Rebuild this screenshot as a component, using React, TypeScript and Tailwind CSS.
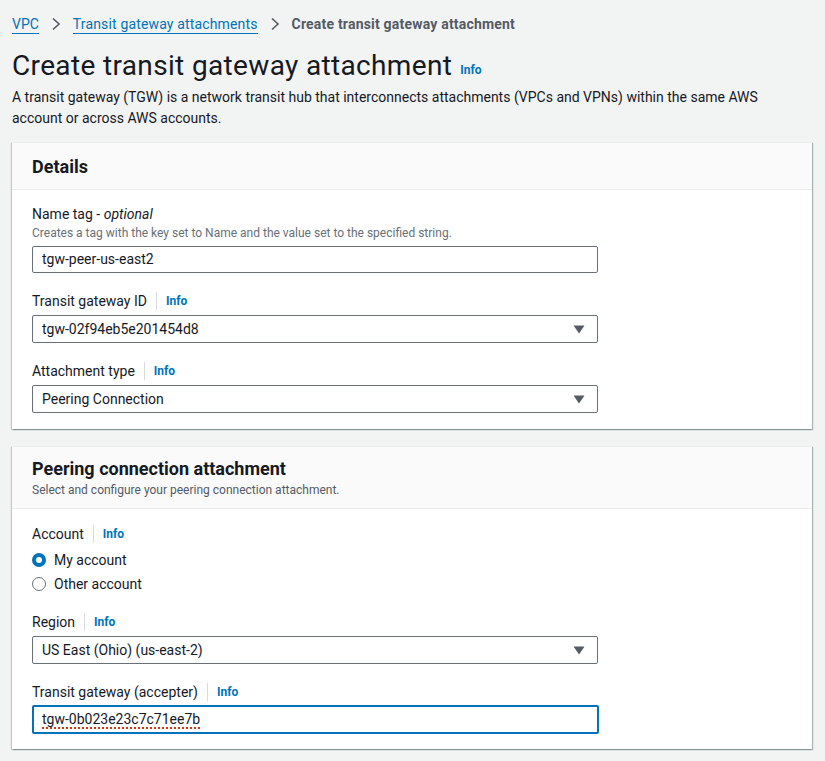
import { ReactNode } from "react"

function Info() {
  return (
    <span className="flex items-center">
      <span className="mx-[9px] h-[18px] w-px bg-[#d5dbdb]" />
      <span className="text-[12px] font-bold text-[#0073bb]">Info</span>
    </span>
  )
}

function Label({ children }: { children: ReactNode }) {
  return (
    <div className="flex h-[22px] items-center text-[14px] leading-[22px] text-[#16191f]">
      <span>{children}</span>
      <Info />
    </div>
  )
}

function Select({ value }: { value: string }) {
  return (
    <div className="mt-[3px] flex h-[28px] w-[566px] items-center justify-between rounded-[2px] border border-[#687078] bg-white pl-[9px] pr-[12px] text-[14px] text-[#16191f]">
      <span>{value}</span>
      <svg width="12" height="9" viewBox="0 0 12 9">
        <path d="M0.5 0.5 H11.5 L6 8.5 Z" fill="#545b64" />
      </svg>
    </div>
  )
}

function Radio({ checked, label }: { checked?: boolean; label: string }) {
  return (
    <div className="flex h-[24px] items-center gap-[8px] text-[14px] text-[#16191f]">
      {checked ? (
        <span className="flex h-[14px] w-[14px] items-center justify-center rounded-full bg-[#0073bb]">
          <span className="h-[6px] w-[6px] rounded-full bg-white" />
        </span>
      ) : (
        <span className="h-[14px] w-[14px] rounded-full border border-[#687078] bg-white" />
      )}
      <span>{label}</span>
    </div>
  )
}

export default function App() {
  return (
    <div
      className="min-h-[761px] w-[825px] bg-[#f2f3f3] px-[12px] text-[#16191f]"
      style={{ fontFamily: 'Roboto, "Noto Sans", Arial, sans-serif' }}
    >
      {/* breadcrumbs */}
      <div className="flex h-[48px] items-center text-[14px]">
        <span className="border-b border-[#0073bb] leading-[18px] text-[#0073bb]">VPC</span>
        <svg className="mx-[12px]" width="10" height="14" viewBox="0 0 10 14">
          <path d="M2 1.5 L8 7 L2 12.5" fill="none" stroke="#545b64" strokeWidth="1.6" />
        </svg>
        <span className="border-b border-[#0073bb] leading-[18px] tracking-[0.15px] text-[#0073bb]">
          Transit gateway attachments
        </span>
        <svg className="mx-[12px]" width="10" height="14" viewBox="0 0 10 14">
          <path d="M2 1.5 L8 7 L2 12.5" fill="none" stroke="#545b64" strokeWidth="1.6" />
        </svg>
        <span className="font-bold tracking-[0.2px] text-[#545b64]">Create transit gateway attachment</span>
      </div>

      {/* title */}
      <div className="flex items-end">
        <h1 className="text-[28px] leading-[36px] tracking-[0.35px] text-[#16191f]">Create transit gateway attachment</h1>
        <span className="mb-[5px] ml-[8px] text-[12px] font-bold text-[#0073bb]">Info</span>
      </div>
      <p className="mt-[3px] pr-[40px] text-[14px] leading-[21px] text-[#16191f]">
        A transit gateway (TGW) is a network transit hub that interconnects attachments (VPCs and VPNs) within the same AWS
        account or across AWS accounts.
      </p>

      {/* details card */}
      <div className="mt-[13px] w-[800px] border-t border-[#eaeded] bg-white shadow-[1px_1px_1px_0_rgba(0,28,36,0.3),-1px_1px_1px_0_rgba(0,28,36,0.2)]">
        <div className="flex h-[47px] items-center border-b border-[#eaeded] bg-[#fafafa] px-[20px]">
          <h2 className="text-[18px] font-bold">Details</h2>
        </div>
        <div className="px-[20px] pb-[16px] pt-[13px]">
          <div className="flex h-[22px] items-center text-[14px]">
            Name tag -&nbsp;<i>optional</i>
          </div>
          <div className="text-[12px] leading-[16px] text-[#687078]">
            Creates a tag with the key set to Name and the value set to the specified string.
          </div>
          <div className="mt-[5px] flex h-[27px] w-[566px] items-center rounded-[2px] border border-[#687078] bg-white pl-[9px] text-[14px]">
            tgw-peer-us-east2
          </div>

          <div className="mt-[17px]">
            <Label>Transit gateway ID</Label>
            <Select value="tgw-02f94eb5e201454d8" />
          </div>
          <div className="mt-[17px]">
            <Label>Attachment type</Label>
            <Select value="Peering Connection" />
          </div>
        </div>
      </div>

      {/* peering card */}
      <div className="mt-[17px] w-[800px] border-t border-[#eaeded] bg-white shadow-[1px_1px_1px_0_rgba(0,28,36,0.3),-1px_1px_1px_0_rgba(0,28,36,0.2)]">
        <div className="border-b border-[#eaeded] bg-[#fafafa] px-[20px] pb-[9px] pt-[10px]">
          <h2 className="text-[18px] font-bold leading-[24px]">Peering connection attachment</h2>
          <div className="text-[12px] leading-[18px] text-[#545b64]">Select and configure your peering connection attachment.</div>
        </div>
        <div className="px-[20px] pb-[15px] pt-[14px]">
          <Label>Account</Label>
          <div className="mt-[3px]">
            <Radio checked label="My account" />
            <Radio label="Other account" />
          </div>

          <div className="mt-[15px]">
            <Label>Region</Label>
            <Select value="US East (Ohio) (us-east-2)" />
          </div>
          <div className="mt-[17px]">
            <Label>Transit gateway (accepter)</Label>
            <div className="mt-[2px] flex h-[29px] w-[567px] items-center rounded-[2px] border-2 border-[#0073bb] bg-white pl-[8px] text-[14px]">
              <span className="underline decoration-[#d13212] decoration-dotted decoration-[1.5px] underline-offset-[3px]">
                tgw-0b023e23c7c71ee7b
              </span>
            </div>
          </div>
        </div>
      </div>
    </div>
  )
}
